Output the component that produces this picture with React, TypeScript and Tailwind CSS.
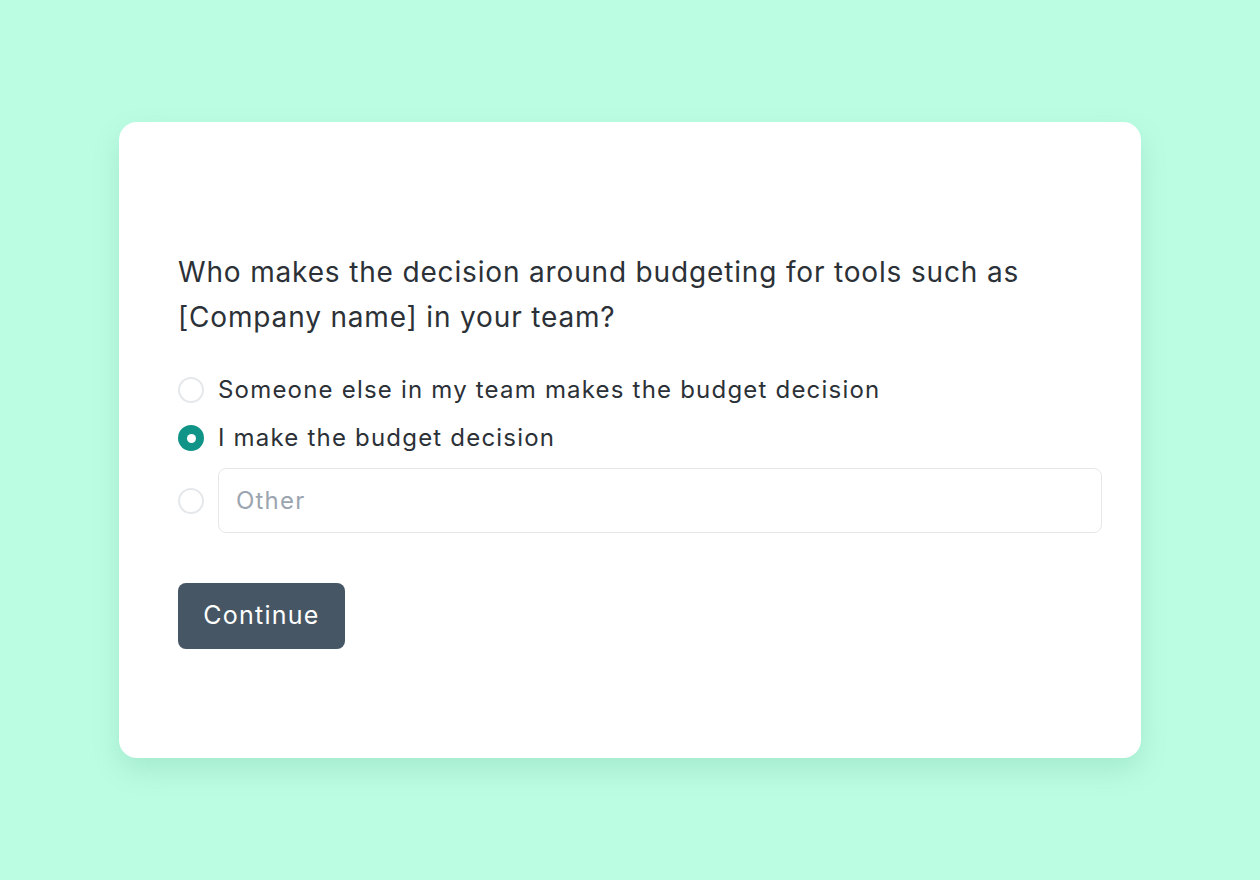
import { useState } from 'react';

const options = [
  'Someone else in my team makes the budget decision',
  'I make the budget decision',
];

function Radio({ checked }: { checked: boolean }) {
  return checked ? (
    <span className="flex h-[26px] w-[26px] shrink-0 items-center justify-center rounded-full bg-[#0f9487]">
      <span className="block h-[9px] w-[9px] rounded-full bg-white" />
    </span>
  ) : (
    <span className="block h-[26px] w-[26px] shrink-0 rounded-full border-2 border-[#e5e8eb] bg-white" />
  );
}

export default function App() {
  const [selected, setSelected] = useState(1);
  const [other, setOther] = useState('');

  return (
    <div
      className="flex min-h-[880px] w-full items-start justify-center bg-[#bbfde3] pt-[122px]"
      style={{ fontFamily: 'Inter, "Noto Sans", sans-serif' }}
    >
      <div className="h-[636px] w-[1022px] rounded-[18px] bg-white pl-[59px] pr-[39px] pt-[128px] shadow-[0_12px_28px_rgba(40,120,90,0.15)]">
        <h1 className="text-[28px] leading-[45px] tracking-[0.03em] text-[#2b3137]">
          Who makes the decision around budgeting for tools such as
          <br />
          [Company name] in your team?
        </h1>

        <div className="mt-[32px] flex flex-col gap-[12px]">
          {options.map((label, i) => (
            <button
              key={label}
              onClick={() => setSelected(i)}
              className="flex items-center gap-[14px] text-left text-[24px] leading-[36px] tracking-[0.05em] text-[#2b3137]"
            >
              <Radio checked={selected === i} />
              <span>{label}</span>
            </button>
          ))}
          <div className="flex items-center gap-[14px]">
            <button className="shrink-0" onClick={() => setSelected(2)}>
              <Radio checked={selected === 2} />
            </button>
            <input
              value={other}
              onChange={(e) => setOther(e.target.value)}
              onFocus={() => setSelected(2)}
              placeholder="Other"
              className="h-[65px] min-w-0 flex-1 rounded-[8px] border border-[#e5e8eb] px-[17px] text-[24px] tracking-[0.05em] text-[#2b3137] placeholder:text-[#9ba5b0] focus:outline-none"
            />
          </div>
        </div>

        <button className="mt-[50px] h-[66px] w-[167px] rounded-[8px] bg-[#465665] text-[25px] tracking-[0.05em] text-white">
          Continue
        </button>
      </div>
    </div>
  );
}
